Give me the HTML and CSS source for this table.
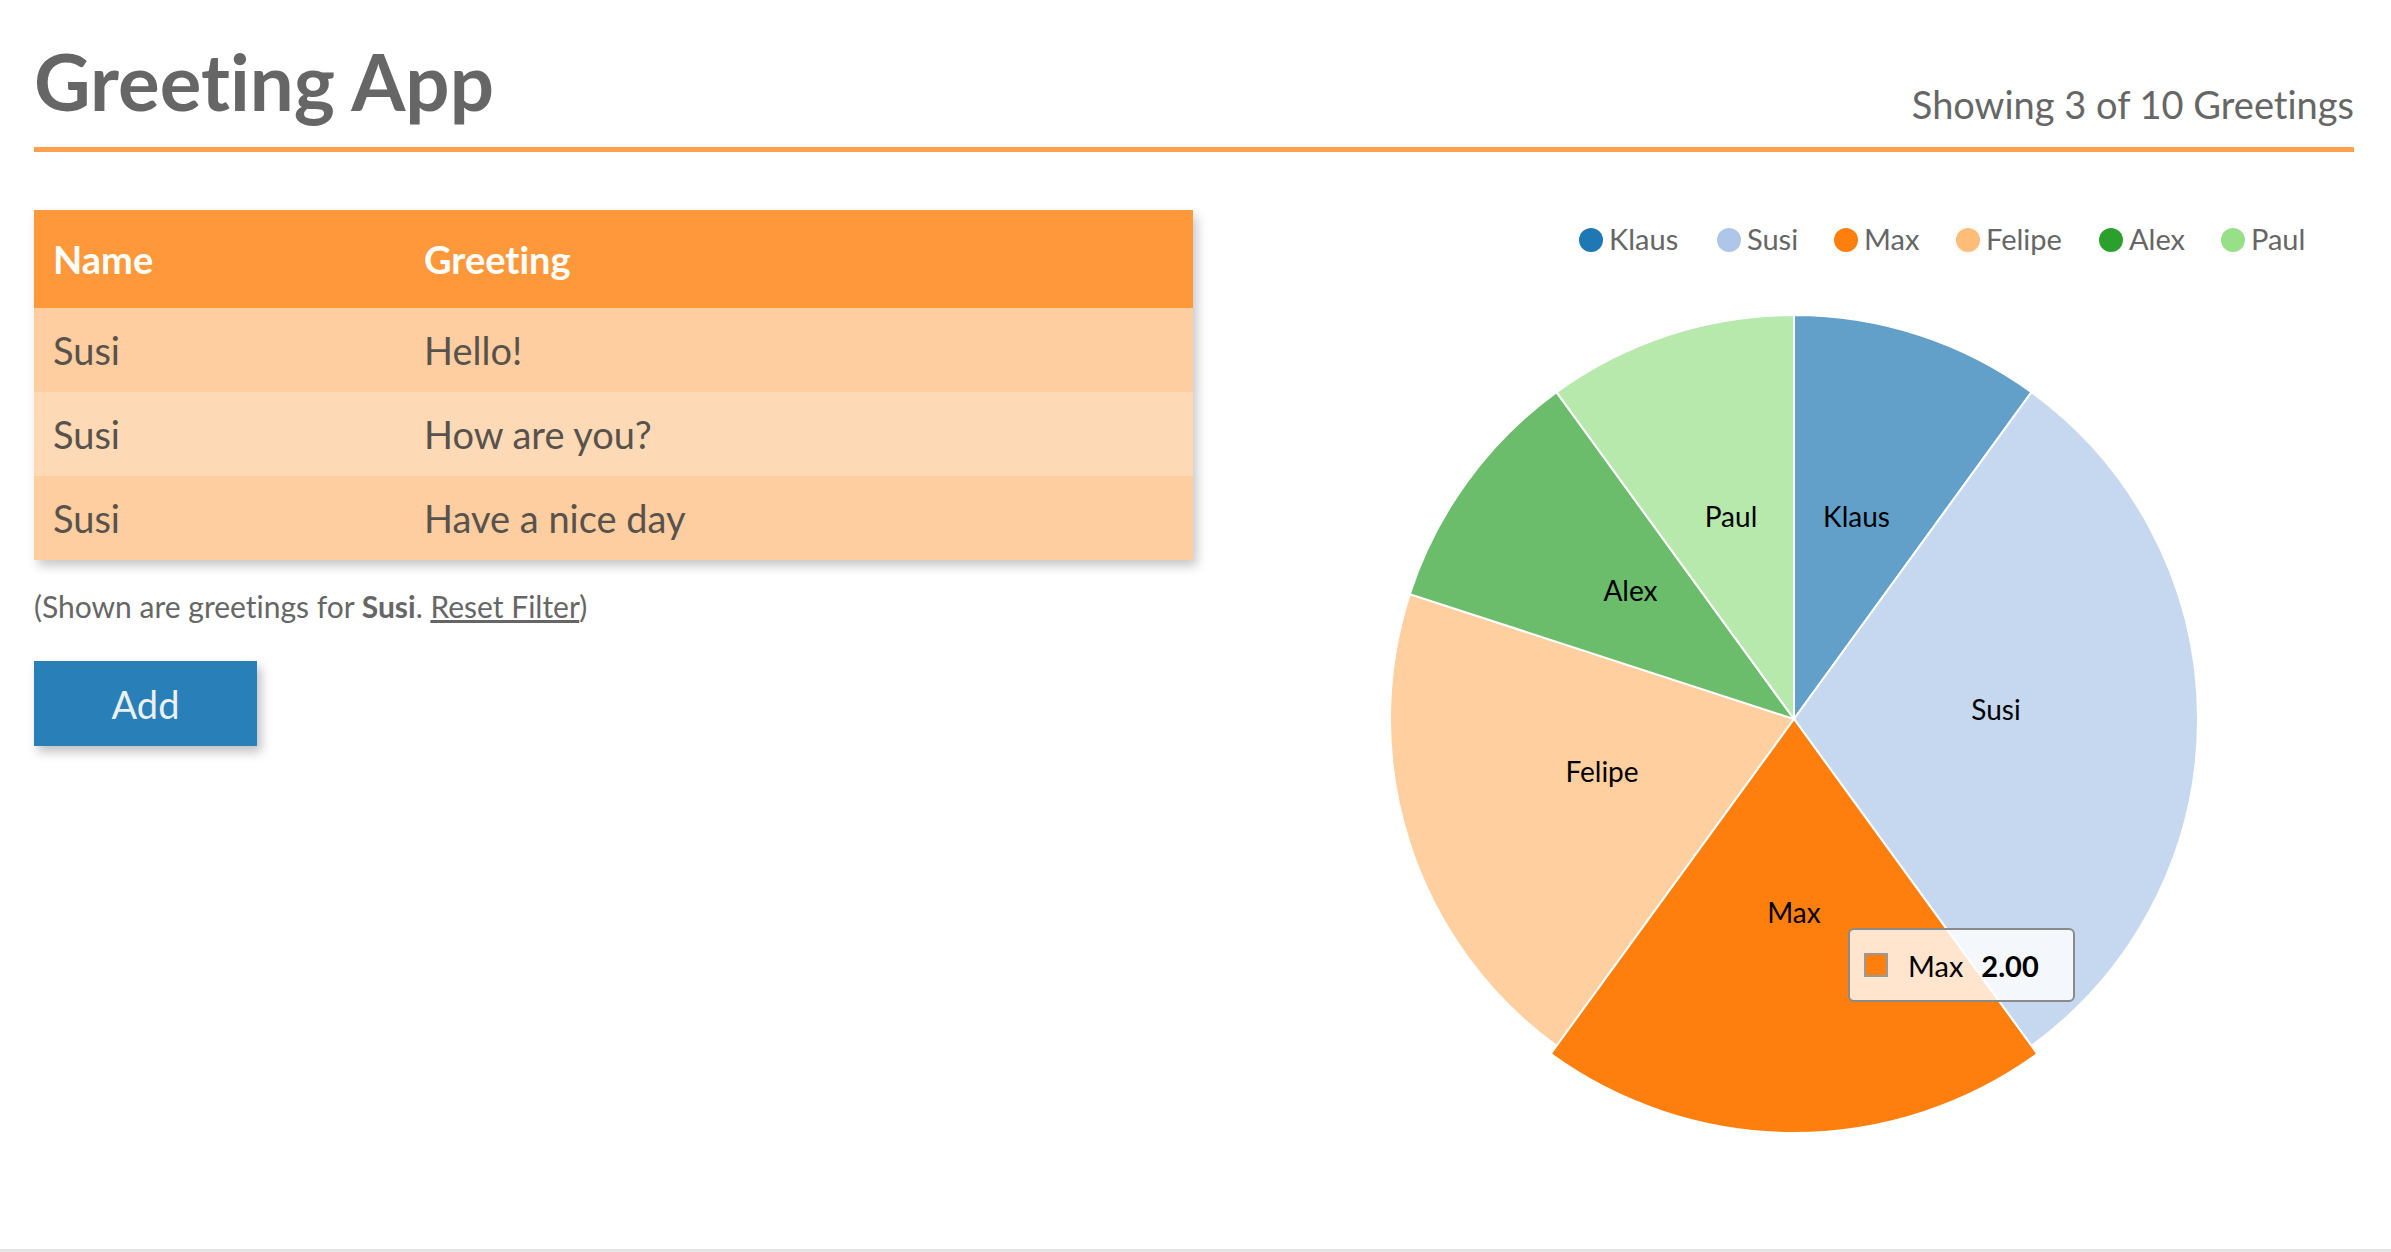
FILE: index.html
```html
<!DOCTYPE html>
<html lang="en">
<head>
<meta charset="utf-8">
<title>Greeting App</title>
<link rel="stylesheet" href="styles.css">
</head>
<body>
<div class="page">
  <header class="header">
    <h1 class="title">Greeting App</h1>
    <div class="count">Showing 3 of 10 Greetings</div>
  </header>
  <main class="content">
    <section class="left">
      <table class="greetings">
        <thead>
          <tr><th class="col-name">Name</th><th>Greeting</th></tr>
        </thead>
        <tbody>
          <tr><td>Susi</td><td>Hello!</td></tr>
          <tr><td>Susi</td><td>How are you?</td></tr>
          <tr><td>Susi</td><td>Have a nice day</td></tr>
        </tbody>
      </table>
      <p class="note">(Shown are greetings for <b>Susi</b>. <a class="reset" href="#">Reset Filter</a>)</p>
      <button class="add">Add</button>
    </section>
    <section class="chart">
      <svg class="chart-svg" width="1120" height="940" viewBox="0 0 1120 940">
        <g class="legend">
          <circle cx="357" cy="30" r="12" fill="#1f77b4"/>
          <text x="375" y="40">Klaus</text>
          <circle cx="495" cy="30" r="12" fill="#aec7e8"/>
          <text x="513" y="40">Susi</text>
          <circle cx="612" cy="30" r="12" fill="#ff7f0e"/>
          <text x="630" y="40">Max</text>
          <circle cx="734" cy="30" r="12" fill="#ffbb78"/>
          <text x="752" y="40">Felipe</text>
          <circle cx="877" cy="30" r="12" fill="#2ca02c"/>
          <text x="895" y="40">Alex</text>
          <circle cx="999" cy="30" r="12" fill="#98df8a"/>
          <text x="1017" y="40">Paul</text>
        </g>
        <g class="slices">
          <path fill="#62a0ca" d="M560,509 L560,105 A404,404 0 0 1 797.47,182.16 Z"/>
          <path fill="#c6d8ef" d="M560,509 L797.47,182.16 A404,404 0 0 1 797.47,835.84 Z"/>
          <path fill="#ffcfa0" d="M560,509 L322.53,835.84 A404,404 0 0 1 175.77,384.16 Z"/>
          <path fill="#6bbc6b" d="M560,509 L175.77,384.16 A404,404 0 0 1 322.53,182.16 Z"/>
          <path fill="#b7e9ad" d="M560,509 L322.53,182.16 A404,404 0 0 1 560,105 Z"/>
          <path fill="#ff7f0e" d="M560,509 L803.34,843.93 A414,414 0 0 1 316.66,843.93 Z"/>
        </g>
        <g class="labels">
          <text x="622.5" y="316.6">Klaus</text>
          <text x="497" y="316.6">Paul</text>
          <text x="396.5" y="390.5">Alex</text>
          <text x="762" y="510">Susi</text>
          <text x="368" y="572">Felipe</text>
          <text x="560" y="713">Max</text>
        </g>
      </svg>
      <div class="tooltip">
        <span class="swatch"></span>
        <span class="tip-key">Max</span>
        <span class="tip-value">2.00</span>
      </div>
    </section>
  </main>
</div>
</body>
</html>
```
FILE: styles.css
```css
html, body {
  margin: 0;
  padding: 0;
  background: #ffffff;
}

body {
  font-family: Lato, "Open Sans", "Liberation Sans", sans-serif;
  font-variant-ligatures: none;
  color: #666666;
}

.page {
  box-sizing: border-box;
  min-height: 100vh;
  padding: 0 37px 0 34px;
  border-bottom: 3px solid #e4e4e4;
}

.header {
  display: flex;
  justify-content: space-between;
  align-items: flex-end;
  padding-top: 42px;
  border-bottom: 5px solid #ffa04c;
}

.title {
  margin: 0 0 26px 0;
  font-size: 78px;
  line-height: 79px;
  font-weight: 700;
  color: #666666;
}

.count {
  margin-bottom: 24px;
  font-size: 38px;
  line-height: 38px;
  color: #666666;
}

.content {
  display: flex;
  gap: 41px;
  margin-top: 58px;
}

.left {
  width: 1159px;
  flex: none;
}

.greetings {
  width: 1159px;
  border-collapse: collapse;
  box-shadow: 4px 6px 10px rgba(0, 0, 0, 0.22);
  font-size: 38px;
  color: #58524c;
}

.greetings th {
  height: 98px;
  padding: 0 0 0 19px;
  background: #ff983a;
  color: #ffffff;
  font-weight: 700;
  text-align: left;
  vertical-align: middle;
}

.greetings .col-name {
  width: 352px;
}

.greetings td {
  height: 84px;
  padding: 0 0 0 19px;
  vertical-align: middle;
}

.greetings tbody tr:nth-child(odd) td {
  background: #fecda0;
}

.greetings tbody tr:nth-child(even) td {
  background: #fdd9b6;
}

.note {
  margin: 31px 0 0 0;
  font-size: 30px;
  line-height: 30px;
  color: #666666;
}

.note b {
  font-weight: 700;
}

.reset {
  color: #666666;
  text-decoration: underline;
}

.add {
  display: flex;
  align-items: center;
  justify-content: center;
  margin-top: 40px;
  width: 223px;
  height: 85px;
  padding: 0;
  border: none;
  background: #2980b9;
  color: #ecf0f1;
  font-family: Lato, "Open Sans", "Liberation Sans", sans-serif;
  font-size: 38px;
  box-shadow: 4px 6px 10px rgba(0, 0, 0, 0.25);
}

.chart {
  position: relative;
  width: 1120px;
  height: 940px;
  flex: none;
}

.chart-svg {
  display: block;
}

.legend text {
  font-family: Lato, "Open Sans", "Liberation Sans", sans-serif;
  font-size: 29px;
  fill: #666666;
}

.slices path {
  stroke: #ffffff;
  stroke-width: 2;
}

.labels text {
  font-family: Lato, "Open Sans", "Liberation Sans", sans-serif;
  font-size: 28px;
  fill: #000000;
  text-anchor: middle;
}

.tooltip {
  position: absolute;
  left: 614px;
  top: 718px;
  box-sizing: border-box;
  width: 227px;
  height: 74px;
  display: flex;
  align-items: center;
  padding-left: 14px;
  border: 2px solid #8a8a8a;
  border-radius: 6px;
  background: rgba(255, 255, 255, 0.8);
  font-size: 29px;
  color: #000000;
}

.swatch {
  box-sizing: border-box;
  width: 24px;
  height: 24px;
  border: 2px solid #999999;
  background: #ff7f0e;
}

.tip-key {
  margin-left: 20px;
}

.tip-value {
  margin-left: 18px;
  font-weight: 700;
}
```
